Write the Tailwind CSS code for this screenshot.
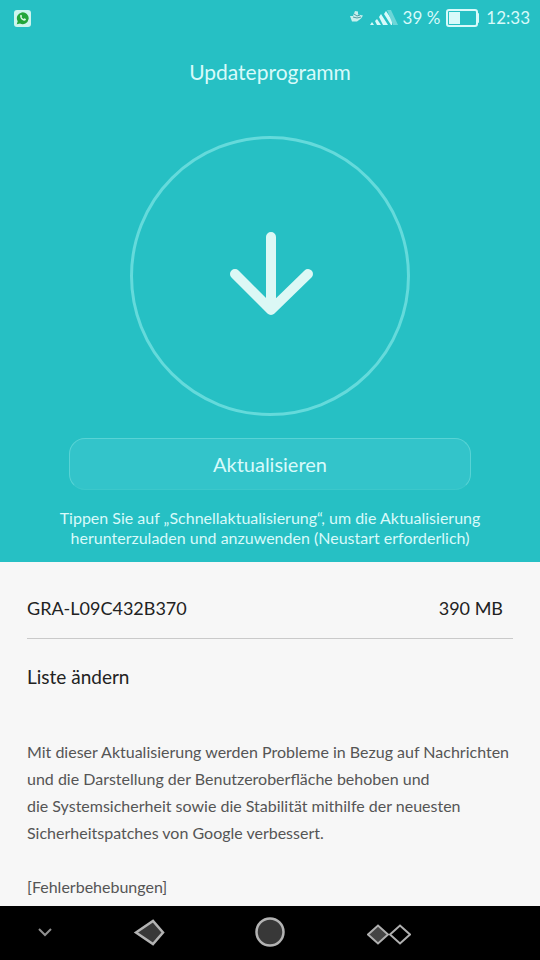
<!DOCTYPE html>
<html lang="de">
<head>
<meta charset="utf-8">
<meta name="viewport" content="width=device-width, initial-scale=1">
<title>Updateprogramm</title>
<script src="https://cdn.jsdelivr.net/npm/@tailwindcss/browser@4"></script>
</head>
<body class="flex min-h-screen flex-col bg-[#f7f7f7] font-['Lato','Open_Sans',sans-serif]">
  <header class="flex flex-col items-center bg-[#26c0c4] pb-[14px] text-[#d8fafa]">
    <div class="flex h-9 w-full items-center justify-between pr-[10px] pl-[14px]">
      <svg class="size-[17px]" viewBox="0 0 17 17" role="img" aria-label="WhatsApp">
        <rect width="17" height="17" rx="3" fill="#cdf5ee"/>
        <path d="M2.800 14.200l.9-3A5.900 5.900 0 1 1 6 13.400z" fill="#23a53a"/>
        <path d="M6.200 5.200c.5-.8 1.200-.7 1.500 0l.4 1-.6.900c.5 1 1.200 1.600 2.200 2l.8-.8 1.400.8c.2 1-.8 1.700-1.700 1.600-2.500-.4-4.300-2.700-4-5.500z" fill="#d9f7e4"/>
      </svg>
      <div class="flex items-center text-[17px]">
        <svg class="mr-[6px] h-5 w-[14px]" viewBox="0 0 14 20" fill="none" aria-hidden="true">
          <path d="M0 8l3 0 2-5 3 .5 0 3 5 1-2 3-4 3-5 0z" fill="#c9efed"/>
          <path d="M4 6l3 2 3-1M3 9l4 1 4-1" stroke="#4f9da2"/>
        </svg>
        <svg class="mr-[5px] h-5 w-7" viewBox="0 0 28 20" aria-hidden="true">
          <g fill="#d8fafa">
            <path d="M0 17l2-3 2 3zM5 13l2-2 4 6H7zM9 9l2-3 7 11h-5z"/>
            <path d="M14 6l2-3 6 9v5h-1z"/>
          </g>
          <path d="M17 2h4l7 15h-5z" fill="#6bd6d8"/>
        </svg>
        <span class="mr-[6px]">39 %</span>
        <svg class="mr-[6px] h-[18px] w-[34px]" viewBox="0 0 34 18" aria-hidden="true">
          <rect x="1" y="1" width="30" height="16" rx="2" fill="none" stroke="#d8fafa" stroke-width="2"/>
          <rect x="3" y="3" width="11" height="12" fill="#d8fafa"/>
          <rect x="31" y="4" width="2" height="10" rx="1" fill="#d8fafa"/>
        </svg>
        <span>12:33</span>
      </div>
    </div>
    <h1 class="mt-[22px] text-[21px] leading-7">Updateprogramm</h1>
    <svg class="mt-[50px] size-[280px]" viewBox="0 0 280 280" fill="none" role="img" aria-label="Herunterladen">
      <circle cx="140" cy="140" r="138.500" stroke="#64dadb" stroke-width="3"/>
      <path d="M141 101v73M105 138l36 36 37-36" stroke="#dcf8f5" stroke-width="10" stroke-linecap="round" stroke-linejoin="round"/>
    </svg>
    <div class="mt-[22px] w-full px-[69px]">
      <button type="button" class="h-[52px] w-full rounded-2xl border border-[#58d3d5] border-b-[#3cc8cb] bg-[#33c4ca] text-xl">Aktualisieren</button>
    </div>
    <p class="mt-[18px] px-5 text-center text-base leading-5">Tippen Sie auf „Schnellaktualisierung“, um die Aktualisierung<br>herunterzuladen und anzuwenden (Neustart erforderlich)</p>
  </header>
  <main class="flex-1 px-[27px]">
    <div class="flex h-[77px] items-center justify-between border-b border-[#cacaca] pt-4 pr-[10px] text-lg text-[#222]">
      <span>GRA-L09C432B370</span>
      <span>390 MB</span>
    </div>
    <h2 class="mt-6 text-[19px] leading-7 text-[#222]">Liste ändern</h2>
    <div class="mt-[47px] text-base leading-[27px] text-[#555]">
      <p>Mit dieser Aktualisierung werden Probleme in Bezug auf Nachrichten<br>und die Darstellung der Benutzeroberfläche behoben und<br>die Systemsicherheit sowie die Stabilität mithilfe der neuesten<br>Sicherheitspatches von Google verbessert.</p>
      <p class="mt-[27px]">[Fehlerbehebungen]</p>
    </div>
  </main>
  <nav aria-label="Navigation" class="sticky bottom-0 flex h-[54px] items-center bg-black pl-[31px]">
    <button type="button" aria-label="Leiste ausblenden" class="mr-[74px]">
      <svg class="h-8 w-7" viewBox="0 0 28 32" fill="none"><path d="M8 12l6 6 6-6" stroke="#909090" stroke-width="2"/></svg>
    </button>
    <button type="button" aria-label="Zurück" class="mr-[90px]">
      <svg class="h-8 w-8" viewBox="0 0 32 32"><path d="M3 15.500L20 4l10 11.500L20 27z" fill="#383838" stroke="#b3b3b3" stroke-width="2.500"/></svg>
    </button>
    <button type="button" aria-label="Startseite" class="mr-[82px]">
      <svg class="h-8 w-[30px]" viewBox="0 0 30 32"><circle cx="15" cy="15" r="13.500" fill="#383838" stroke="#b3b3b3" stroke-width="2.500"/></svg>
    </button>
    <button type="button" aria-label="Letzte Apps">
      <svg class="h-8 w-[44px]" viewBox="0 0 44 32" stroke="#b0b0b0" stroke-width="2"><path d="M1 17.500L11 8.500l10 9-10 9z" fill="#444"/><path d="M23 17.500l10-9 10 9-10 9z" fill="none"/></svg>
    </button>
  </nav>
</body>
</html>
